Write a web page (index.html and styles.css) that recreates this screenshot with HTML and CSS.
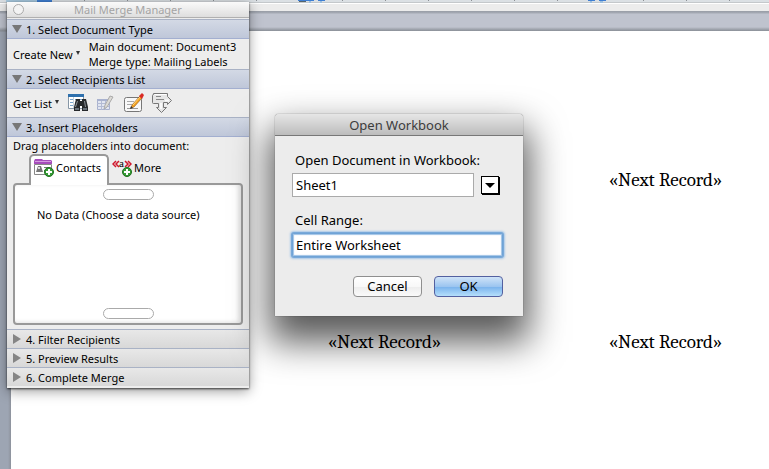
FILE: index.html
```html
<!DOCTYPE html>
<html lang="en">
<head>
    <meta charset="UTF-8">
    <meta name="viewport" content="width=device-width, initial-scale=1.0">
    <title>Mail Merge Manager</title>
    <link rel="stylesheet" href="styles.css">
</head>
<body>
    <main class="workspace">
        <svg class="ruler" width="100%" height="4" aria-hidden="true">
            <defs>
                <pattern id="ticks" x="41" width="43" height="4" patternUnits="userSpaceOnUse">
                    <rect width="1" height="1" fill="#8c9095"/>
                </pattern>
            </defs>
            <rect width="100%" height="2" fill="#dbe0e4"/>
            <rect width="100%" height="1" y="2" fill="#c4c8cb"/>
            <rect width="100%" height="1" y="3" fill="#fff"/>
            <rect width="100%" height="2" fill="url(#ticks)"/>
            <rect x="6" width="36" height="2" fill="#a8c9df"/>
            <path fill="#3f7fd3" d="M37 0h15v2H37zM298 0h16v1h-16zM318 0h7v1h-7zM588 0h7v1h-7zM599 0h7v1h-7z"/>
            <path fill="#9fc0dd" d="M309 1h2v2h-2zM320 1h2v2h-2zM590 1h2v2h-2zM600 1h3v2h-3z"/>
            <path fill="#56656c" d="M299 1h7v1h-7z"/>
        </svg>
        <div class="column-bar"></div>
        <div class="desk">
            <div class="page">
                <div class="labels">
                    <p>«Next Record»</p>
                    <p>«Next Record»</p>
                    <p>«Next Record»</p>
                    <p>«Next Record»</p>
                </div>
            </div>
        </div>
    </main>

    <aside class="palette">
        <header class="palette-title">
            <button class="close" aria-label="Close"></button>
            <h1>Mail Merge Manager</h1>
        </header>

        <button class="section-head open">1. Select Document Type</button>
        <div class="row doc-type">
            <button class="menu-button">Create New</button>
            <p>Main document: Document3<br>Merge type: Mailing Labels</p>
        </div>

        <button class="section-head open">2. Select Recipients List</button>
        <div class="row tools">
            <button class="menu-button">Get List</button>
            <button class="tool" aria-label="Find recipient">
                <svg width="22" height="20" viewBox="0 0 22 20">
                    <path fill="#fff" stroke="#8797a6" d="M1.500 1.500h15v14h-15z"/>
                    <path fill="#2e70ad" d="M1 1h16v3H1z"/>
                    <path stroke="#7aa5cc" d="M3 6.500h3M8 6.500h7M3 9.500h3M8 9.500h3M3 12.500h3"/>
                    <path stroke="#c9d4de" d="M6.500 4v11"/>
                    <path fill="#26292c" d="M9 6h4v2h2V6h4l2 8v4h-6v-5h-2v5H7v-4z"/>
                    <path stroke="#8b9299" d="M10.500 8l-2 6M17.500 8l1 6"/>
                    <path fill="#68717a" d="M8 15h4v2H8zM16 15h4v2h-4z"/>
                </svg>
            </button>
            <button class="tool" aria-label="Edit data source" disabled>
                <svg width="20" height="20" viewBox="0 0 20 20">
                    <path fill="#e2e6f1" stroke="#a9b2cf" d="M2.500 6.500h12v10h-12z"/>
                    <path fill="#a9b2cf" d="M2 6h13v2H2z"/>
                    <path stroke="#b3bbd4" d="M2 10.500h12M2 13.500h12M6.500 8v9M10.500 8v9"/>
                    <path fill="#dcdad5" stroke="#aaa" d="M15 3l3 1-6 10-3 2 1-4z"/>
                </svg>
            </button>
            <button class="tool" aria-label="Edit labels">
                <svg width="22" height="20" viewBox="0 0 22 20">
                    <rect x="1.500" y="4.500" width="17" height="14" rx="2" fill="#f8f8f8" stroke="#777"/>
                    <path stroke="#aaa" d="M4 8.500h7M4 11.500h5"/>
                    <path stroke="#999" d="M4 15.500h11"/>
                    <path fill="#f5a321" stroke="#8a531c" stroke-width=".6" d="M17 3l2 2-8 9-3 1 1-3z"/>
                    <path stroke="#ffd679" d="M17 4l-7 8"/>
                    <path fill="#d92b24" d="M16 3l3-3 2 2-2 4z"/>
                    <path fill="#333" d="M7 16l1-3 2 2z"/>
                </svg>
            </button>
            <button class="tool" aria-label="Insert next record">
                <svg width="22" height="20" viewBox="0 0 22 20">
                    <path fill="#e6e6e6" stroke="#777" stroke-linejoin="round" d="M2.500.500h14v3l4 4-4 4v-2h-4v5h3l-5 5-5-5h2v-4h-5q-1 0-1-1v-7q0-1 1-1z"/>
                    <path stroke="#888" d="M5 3.500h5M5 6.500h8"/>
                    <path stroke="#fafafa" stroke-width="2" d="M10 10v6M14 7.500h4"/>
                    <path stroke="#fff" d="M3.500 1.500h12"/>
                </svg>
            </button>
        </div>

        <button class="section-head open">3. Insert Placeholders</button>
        <div class="placeholders">
            <p>Drag placeholders into document:</p>
            <div class="tabs">
                <button class="tab selected">
                    <svg width="20" height="18" viewBox="0 0 20 18" aria-hidden="true">
                        <path fill="#a64dbb" d="M0 2l1-2h7l1 1h8l1 1v3H0z"/>
                        <path fill="#d49be0" d="M1 2h16v1H1z"/>
                        <path fill="#fff" stroke="#888" d="M.500 5.500h17v10H.500z"/>
                        <path fill="#777" d="M2 13l1-3 1-3h3l1 3 1 3zM10 8h6v1h-6zM10 11h4v1h-4z"/>
                        <circle cx="5" cy="9" r="1" fill="#fff"/>
                        <circle cx="15" cy="13" r="4.500" fill="#359b35" stroke="#1f701f"/>
                        <path stroke="#fff" stroke-width="2" d="M12 13h6M15 10v6"/>
                    </svg>
                    Contacts
                </button>
                <button class="tab">
                    <svg width="20" height="20" viewBox="0 0 20 20" aria-hidden="true">
                        <path fill="none" stroke="#d0182d" stroke-width="1.500" d="M4 4L1 7l3 3M7 4L4 7l3 3M13 4l3 3-3 3M16 4l3 3-3 3"/>
                        <text x="7" y="10" class="field-letter">a</text>
                        <circle cx="15" cy="15" r="4.500" fill="#359b35" stroke="#1f701f"/>
                        <path stroke="#fff" stroke-width="2" d="M12 15h6M15 12v6"/>
                    </svg>
                    More
                </button>
            </div>
            <div class="well">
                <button class="scroller" aria-label="Scroll up"></button>
                <p>No Data (Choose a data source)</p>
                <button class="scroller" aria-label="Scroll down"></button>
            </div>
        </div>

        <button class="section-head">4. Filter Recipients</button>
        <button class="section-head">5. Preview Results</button>
        <button class="section-head">6. Complete Merge</button>
    </aside>

    <form class="dialog" role="dialog" aria-labelledby="dialog-title">
        <h2 id="dialog-title">Open Workbook</h2>
        <div class="dialog-body">
            <label for="sheet">Open Document in Workbook:</label>
            <div class="combo">
                <input id="sheet" type="text" value="Sheet1">
                <button type="button" class="combo-arrow" aria-label="Choose sheet"></button>
            </div>
            <label for="range">Cell Range:</label>
            <input id="range" class="focused" type="text" value="Entire Worksheet">
            <div class="actions">
                <button type="button" class="push">Cancel</button>
                <button type="submit" class="push default">OK</button>
            </div>
        </div>
    </form>
</body>
</html>
```

FILE: styles.css
```css
* {
    margin: 0;
    padding: 0;
    box-sizing: border-box;
}

body {
    font-family: "Lucida Grande", "Noto Sans", sans-serif;
    font-size: 11px;
    color: #000;
    height: 100vh;
    overflow: hidden;
}

button,
input {
    font: inherit;
    color: inherit;
    border: 0;
    background: none;
}

/* Document window */
.workspace {
    display: flex;
    flex-direction: column;
    height: 100vh;
}

.ruler {
    display: block;
    flex: none;
}

.column-bar {
    flex: none;
    height: 7px;
    background: #ececec;
}

.desk {
    flex: 1;
    min-height: 0;
    padding: 20px 0 0 11px;
    background: linear-gradient(to right, transparent 8px, #8d929c 11px),
        linear-gradient(#989da5 0, #a5aab4 2px, #bfc3ce 3px, #bfc3ce 16px, #a2a7b0 18px, #8b9097 20px, #9da5b3 21px);
    background-size: 11px 100%, 100% 100%;
    background-position: 0 20px, 0 0;
    background-repeat: no-repeat;
}

.page {
    height: 100%;
    overflow: hidden;
    background: #fff;
}

.labels {
    display: grid;
    grid-template-columns: repeat(2, 281px);
    grid-auto-rows: 162px;
    place-items: center;
    margin: 68px 0 0 233px;
    font-family: Cambria, "DejaVu Serif Condensed", "DejaVu Serif", serif;
    font-size: 19px;
}

/* Mail Merge palette */
.palette {
    position: absolute;
    top: 2px;
    left: 7px;
    width: 242px;
    padding-bottom: 2px;
    background: #ededed;
    box-shadow: 0 1px 2px rgba(0, 0, 0, 0.7), 0 3px 12px rgba(0, 0, 0, 0.4);
}

.palette-title {
    display: grid;
    grid-template-columns: 22px 1fr 22px;
    align-items: center;
    height: 16px;
    margin-bottom: 1px;
    background: linear-gradient(#fafafa, #dedede);
    border-bottom: 1px solid #b0b0b0;
}

.palette-title h1 {
    font-size: 11px;
    font-weight: normal;
    text-align: center;
    color: #a4a4a4;
}

.close {
    width: 11px;
    height: 11px;
    margin-left: 6px;
    border: 1px solid #aaa;
    border-radius: 50%;
    background: #f3f3f3;
}

.section-head {
    display: flex;
    align-items: center;
    gap: 5px;
    width: 100%;
    height: 19px;
    padding-left: 6px;
    border-top: 1px solid #a9b2c5;
    background: linear-gradient(#e8e8e8, #d8d8d8);
}

.section-head::before {
    content: "";
    width: 8px;
    height: 10px;
    background: #858585;
    clip-path: polygon(0 0, 100% 50%, 0 100%);
}

.section-head.open {
    height: 20px;
    gap: 4px;
    padding-left: 5px;
    border-bottom: 1px solid #a3afd0;
    background: linear-gradient(#d3d9e5, #bfc7d9);
}

.section-head.open::before {
    width: 10px;
    height: 8px;
    background: #777;
    clip-path: polygon(0 0, 100% 0, 50% 100%);
}

.row {
    display: flex;
    align-items: center;
    padding-left: 6px;
}

.doc-type {
    gap: 9px;
    height: 30px;
    line-height: 15px;
    white-space: nowrap;
}

.tools {
    gap: 6px;
    height: 28px;
}

.tools .menu-button {
    margin-right: 2px;
}

.menu-button {
    display: flex;
    align-items: center;
    gap: 3px;
}

.menu-button::after {
    content: "";
    margin-bottom: 2px;
    border: 2px solid transparent;
    border-top: 4px solid #333;
    border-bottom: 0;
}

.tool {
    width: 22px;
    height: 20px;
}

.tool svg {
    display: block;
}

.placeholders {
    padding: 0 6px 4px;
}

.placeholders > p {
    line-height: 17px;
}

.tabs {
    display: flex;
    padding-left: 16px;
}

.tab {
    display: flex;
    align-items: center;
    gap: 2px;
    height: 29px;
    padding: 0 3px 3px;
}

.tab.selected {
    z-index: 1;
    margin-bottom: -2px;
    height: 31px;
    padding: 0 6px 6px 3px;
    border: 2px solid #999;
    border-bottom: 0;
    border-radius: 5px 5px 0 0;
    background: #fff;
}

.field-letter {
    font-family: "Liberation Serif", serif;
    font-size: 11px;
}

.well {
    display: flex;
    flex-direction: column;
    align-items: center;
    height: 142px;
    padding: 4px;
    border: 2px solid #999;
    border-radius: 4px;
    background: #fff;
    box-shadow: inset -3px -1px 4px rgba(0, 0, 0, 0.12);
}

.well p {
    flex: 1;
    align-self: flex-start;
    padding: 7px 0 0 18px;
}

.scroller {
    width: 51px;
    height: 11px;
    border: 1px solid #aaa;
    border-radius: 6px;
    background: #fff;
}

/* Open Workbook dialog */
.dialog {
    position: absolute;
    top: 114px;
    left: 275px;
    width: 248px;
    font-size: 13px;
    border-radius: 4px 4px 0 0;
    background: #ececec;
    box-shadow: 0 0 1px rgba(0, 0, 0, 0.8), 0 20px 36px 6px rgba(0, 0, 0, 0.65);
}

.dialog h2 {
    height: 22px;
    line-height: 22px;
    font-size: 13px;
    font-weight: normal;
    text-align: center;
    color: #3c3c3c;
    border-bottom: 1px solid #777;
    border-radius: 4px 4px 0 0;
    background: linear-gradient(#e6e6e6, #bcbcbc);
}

.dialog-body {
    display: flex;
    flex-direction: column;
    padding: 14px 20px 19px 17px;
}

.dialog label {
    padding-left: 3px;
    line-height: 20px;
}

.combo {
    display: flex;
    align-items: center;
    gap: 7px;
    margin: 3px 4px 13px 0;
}

.dialog input {
    width: 100%;
    min-width: 0;
    height: 24px;
    padding: 0 3px;
    border: 1px solid #aaa;
    background: #fff;
    font-family: Geneva, "Noto Sans", sans-serif;
    font-size: 13px;
}

.dialog input.focused {
    margin-top: 3px;
    border-color: #6fa3d6;
    border-radius: 2px;
    outline: 0;
    box-shadow: 0 0 0 1px #79a9d9, 0 0 2px 2px #a8c8e8, inset 0 0 1px 1px #9fc2e6;
}

.combo-arrow {
    display: flex;
    align-items: center;
    justify-content: center;
    flex: none;
    width: 18px;
    height: 18px;
    border: 1px solid #000;
    background: #fff;
    box-shadow: 1px 1px 0 #000;
}

.combo-arrow::before {
    content: "";
    border: 5px solid transparent;
    border-top-color: #000;
    border-bottom: 0;
}

.actions {
    display: flex;
    justify-content: flex-end;
    gap: 12px;
    margin-top: 19px;
}

.push {
    width: 69px;
    height: 21px;
    line-height: 19px;
    border: 1px solid #8f8f8f;
    border-radius: 4px;
    background: linear-gradient(#fff 0, #f8f8f8 50%, #ededed 51%, #fafafa);
}

.push.default {
    border-color: #5360a0;
    background: linear-gradient(#cfe3f8 0, #9cc5f0 50%, #78b1ec 51%, #b5dffb);
}
```
